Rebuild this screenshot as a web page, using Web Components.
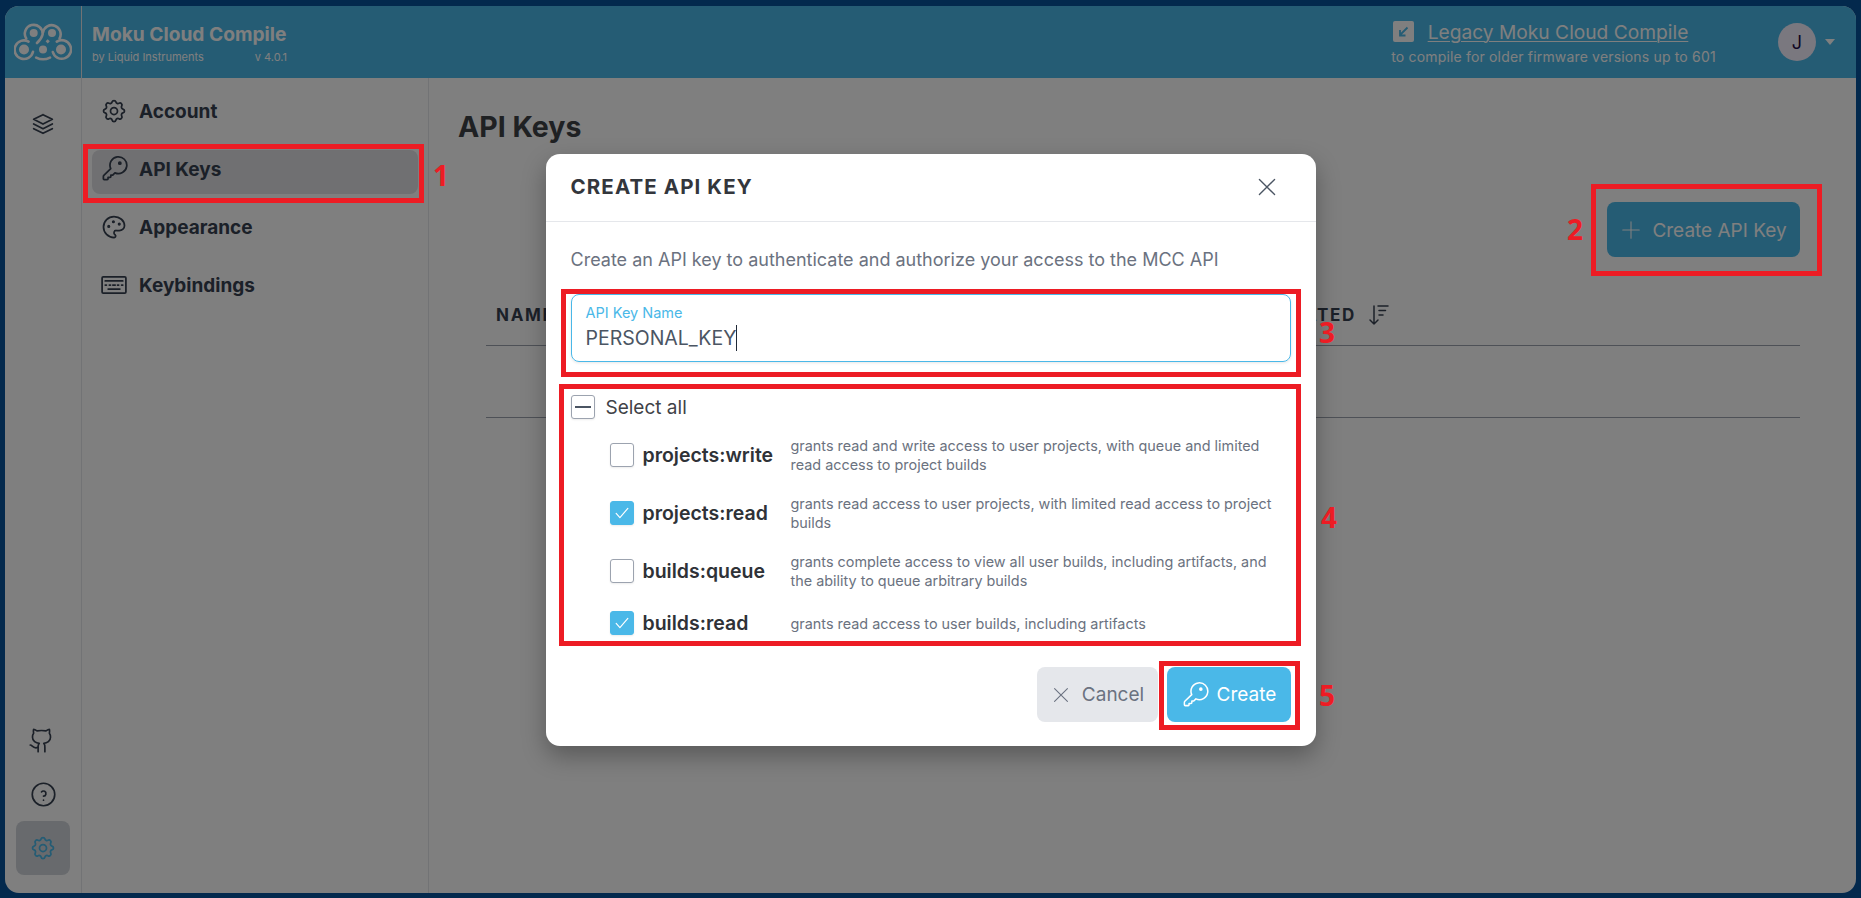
<!DOCTYPE html>
<html lang="en"><head><meta charset="utf-8"><title>Moku Cloud Compile</title>
<style>
html,body{margin:0;height:100%}
body{font-family:Inter,"Liberation Sans",sans-serif;background:#06529a;overflow:hidden}
</style></head><body>
<moku-app>
  <moku-header slot="header"></moku-header>
  <moku-rail slot="rail"></moku-rail>
  <moku-nav slot="nav">
    <nav-item icon="settings">Account</nav-item>
    <nav-item icon="key" active>API Keys</nav-item>
    <nav-item icon="palette">Appearance</nav-item>
    <nav-item icon="keyboard">Keybindings</nav-item>
  </moku-nav>
  <keys-page slot="main"></keys-page>
</moku-app>
<modal-overlay>
  <key-modal></key-modal>
</modal-overlay>
<mark-box x="83" y="144" w="341" h="59" n="1" nx="433" ny="165"></mark-box>
<mark-box x="1591" y="184" w="231" h="92" n="2" nx="1567" ny="219"></mark-box>
<mark-box x="561" y="289" w="740" h="88" n="3" nx="1319" ny="322"></mark-box>
<mark-box x="559" y="384" w="742" h="262" n="4" nx="1321" ny="507"></mark-box>
<mark-box x="1159" y="661" w="141" h="69" n="5" nx="1319" ny="685"></mark-box>
<script>
const ICONS={
settings:'<path d="M10.325 4.317c.426 -1.756 2.924 -1.756 3.35 0a1.724 1.724 0 0 0 2.573 1.066c1.543 -.94 3.31 .826 2.37 2.37a1.724 1.724 0 0 0 1.065 2.572c1.756 .426 1.756 2.924 0 3.35a1.724 1.724 0 0 0 -1.066 2.573c.94 1.543 -.826 3.31 -2.37 2.37a1.724 1.724 0 0 0 -2.572 1.065c-.426 1.756 -2.924 1.756 -3.35 0a1.724 1.724 0 0 0 -2.573 -1.066c-1.543 .94 -3.31 -.826 -2.37 -2.37a1.724 1.724 0 0 0 -1.065 -2.572c-1.756 -.426 -1.756 -2.924 0 -3.35a1.724 1.724 0 0 0 1.066 -2.573c-.94 -1.543 .826 -3.31 2.37 -2.37c1 .608 2.296 .07 2.572 -1.065z"/><circle cx="12" cy="12" r="3"/>',
key:'<path d="M9.2 11.7 3.3 17.4c-.3.3-.4.6-.4 1v2c0 .4.3.7.7.7h2.6c.4 0 .7-.3.7-.7v-1.2h1.7c.4 0 .7-.3.7-.7v-1.3h1.6l1.9-1.9A7.2 7.2 0 1 0 9.2 11.7z"/><circle cx="17" cy="7" r=".9" fill="currentColor"/>',
palette:'<path d="M12 21a9 9 0 0 1 0 -18c4.97 0 9 3.582 9 8c0 1.06 -.474 2.078 -1.318 2.828c-.844 .75 -1.989 1.172 -3.182 1.172h-2.5a2 2 0 0 0 -1 3.75a1.3 1.3 0 0 1 -1 2.25"/><circle cx="7.5" cy="11.5" r=".6" fill="currentColor"/><circle cx="11.5" cy="7.5" r=".6" fill="currentColor"/><circle cx="16.5" cy="9.5" r=".6" fill="currentColor"/>',
keyboard:'<rect x="1.8" y="5" width="20.4" height="14" rx="1"/><path d="M4.5 8.5h15M4.5 12h1M8 12h1M11 12h2M15 12h1M18.5 12h1M7 15.5h10"/>',
stack:'<path d="M12 4l-8 4l8 4l8 -4l-8 -4"/><path d="M4 12l8 4l8 -4"/><path d="M4 16l8 4l8 -4"/>',
github:'<path d="M15 22v-4a4.8 4.8 0 0 0-1-3.5c3 0 6-2 6-5.5.08-1.25-.27-2.48-1-3.5.28-1.15.28-2.35 0-3.5 0 0-1 0-3 1.5-2.64-.5-5.36-.5-8 0C6 2 5 2 5 2c-.3 1.15-.3 2.35 0 3.5A5.403 5.403 0 0 0 4 9c0 3.5 3 5.5 6 5.5-.39.49-.68 1.05-.85 1.65-.17.6-.22 1.23-.15 1.85v4"/><path d="M9 18c-4.51 2-5-2-7-2"/>',
help:'<circle cx="12" cy="12" r="10"/><path d="M12 17v.01"/><path d="M12 13.5a2.3 2.3 0 0 0 1 -4.3a2.3 2.3 0 0 0 -2.8 .55"/>',
plus:'<path d="M12 3v18M3 12h18"/>',
x:'<path d="M5 5l14 14M19 5L5 19"/>',
check:'<path d="M5 12.5l4.5 5L19 6.5"/>',
sort:'<path d="M8 3v18M4 17l4 4 4-4"/><path d="M12 3h10M13 7.5h6.5M13 12h4"/>'
};
class MokuIcon extends HTMLElement{
  static get observedAttributes(){return['name']}
  constructor(){super();this.attachShadow({mode:'open'})}
  connectedCallback(){this.render()}
  attributeChangedCallback(){this.render()}
  render(){
    const s=this.getAttribute('size')||24,w=this.getAttribute('sw')||1.5;
    this.shadowRoot.innerHTML=`<style>:host{display:inline-flex;flex:none;width:${s}px;height:${s}px}svg{width:100%;height:100%;fill:none;stroke:currentColor;stroke-width:${w};stroke-linecap:round;stroke-linejoin:round}</style><svg viewBox="0 0 24 24">${ICONS[this.getAttribute('name')]||''}</svg>`;
  }
}
customElements.define('moku-icon',MokuIcon);

class MokuApp extends HTMLElement{
  constructor(){super();this.attachShadow({mode:'open'}).innerHTML=`<style>
  :host{display:grid;box-sizing:border-box;height:898px;padding:6px 5px 5px;}
  .win{display:grid;grid-template-columns:77px 347px 1fr;grid-template-rows:72px 1fr;background:#fff;border-radius:14px;overflow:hidden;min-height:0}
  .h{grid-column:1/-1}
  .r{box-shadow:inset -1px 0 0 #e5e7eb}
  </style><div class="win"><div class="h"><slot name="header"></slot></div><div class="r" style="display:grid"><slot name="rail"></slot></div><div class="r" style="display:grid"><slot name="nav"></slot></div><div style="display:grid"><slot name="main"></slot></div></div>`;}
}
customElements.define('moku-app',MokuApp);

class MokuHeader extends HTMLElement{
  constructor(){super();this.attachShadow({mode:'open'}).innerHTML=`<style>
  :host{display:flex;height:72px;background:#4ab8e8;color:#fff;align-items:stretch}
  .logo{width:76px;border-right:1px solid #e5e7eb;display:flex;align-items:center;justify-content:center}
  .brand{padding:2px 0 0 10px;width:195px;display:flex;flex-direction:column;justify-content:center}
  .t{font-size:19.2px;font-weight:700;line-height:24px;white-space:nowrap;height:25px}
  .s{display:flex;justify-content:space-between;font-size:11px;line-height:16px;margin-top:2px;white-space:nowrap;font-weight:400}
  .sp{flex:1}
  .leg{display:flex;flex-direction:column;align-items:center;justify-content:center;width:327px;margin-right:61px;padding-top:1px}
  .a{display:flex;align-items:center;gap:14px;font-size:19.2px;line-height:26px;height:26px;margin-right:26px}
  .a u{text-underline-offset:2px;text-decoration-thickness:1px}
  .box{width:21px;height:21px;background:#fff;border-radius:2px;display:flex;align-items:center;justify-content:center;color:#4ab8e8}
  .b{font-size:14px;line-height:20px;margin-top:2px;white-space:nowrap;letter-spacing:.17px}
  .av{width:38px;height:38px;border-radius:50%;background:#f4f0ff;color:#1e0b46;display:flex;align-items:center;justify-content:center;font-size:18px;align-self:center}
  .caret{align-self:center;margin:0 21px 0 9px;width:0;height:0;border:5px solid transparent;border-top:6px solid #fff;border-bottom:0}
  </style>
  <div class="logo"><svg width="58" height="38" viewBox="14 24 58 38" fill="none" stroke="#fff" stroke-width="2.6" stroke-linecap="round">
    <g fill="#fff" stroke="none"><circle cx="24" cy="50.5" r="5"/><circle cx="43" cy="50.5" r="4"/><circle cx="61" cy="50.5" r="5"/><circle cx="33.7" cy="34" r="4"/><circle cx="52" cy="34" r="4"/><path d="M47.7 40.2l2.1 2.1-2.1 2.1-2.1-2.1z"/></g>
    <path d="M28.5 42.6A9.3 9.3 0 1 0 33 52.8"/><path d="M26.2 39.5A8.9 8.9 0 1 1 42.6 35.5Q41.5 40 37 44"/>
    <path d="M43 33.5A8.9 8.9 0 1 1 59.6 39.3"/><path d="M56.8 42.6A9.3 9.3 0 1 1 52.8 53"/>
    <path d="M36.2 58.6Q43 62 50 58.6"/>
  </svg></div>
  <div class="brand"><div class="t">Moku Cloud Compile</div><div class="s"><span>by Liquid Instruments</span><span>v 4.0.1</span></div></div>
  <div class="sp"></div>
  <div class="leg"><div class="a"><span class="box"><svg width="13" height="13" viewBox="0 0 13 13" fill="none" stroke="currentColor" stroke-width="1.8"><path d="M10.5 2.5 3 10M3 5v5.5h5.5"/></svg></span><u>Legacy Moku Cloud Compile</u></div><div class="b">to compile for older firmware versions up to 601</div></div>
  <div class="av">J</div><div class="caret"></div>`;}
}
customElements.define('moku-header',MokuHeader);

class MokuRail extends HTMLElement{
  constructor(){super();this.attachShadow({mode:'open'}).innerHTML=`<style>
  :host{display:flex;flex-direction:column;align-items:center;padding:34px 1px 18px 0;color:#374151;box-sizing:border-box;height:815px}
  .sp{flex:1}
  .i{width:54px;height:54px;display:flex;align-items:center;justify-content:center}
  .on{background:#d1d5db;border-radius:8px;color:#4ab8e8}
  </style><div class="i" style="height:24px"><moku-icon name="stack" size="28"></moku-icon></div><div class="sp"></div>
  <div class="i"><moku-icon name="github" size="27" style="margin-right:3px"></moku-icon></div><div class="i"><moku-icon name="help" size="27"></moku-icon></div><div class="i on"><moku-icon name="settings" size="28"></moku-icon></div>`;}
}
customElements.define('moku-rail',MokuRail);

class MokuNav extends HTMLElement{
  constructor(){super();this.attachShadow({mode:'open'}).innerHTML=`<style>:host{display:flex;flex-direction:column;padding:14px 11px 0 10px;gap:14px}</style><slot></slot>`;}
}
customElements.define('moku-nav',MokuNav);

class NavItem extends HTMLElement{
  constructor(){super();this.attachShadow({mode:'open'}).innerHTML=`<style>
  :host{display:flex;align-items:center;gap:11px;height:44px;box-sizing:border-box;padding:0 0 6px 8px;border-radius:8px;font-size:19px;font-weight:700;color:#374151;white-space:nowrap}
  :host([active]){background:#e0e1e5}
  </style><moku-icon size="28"></moku-icon><slot></slot>`;}
  connectedCallback(){this.shadowRoot.querySelector('moku-icon').setAttribute('name',this.getAttribute('icon'));}
}
customElements.define('nav-item',NavItem);

class KeysPage extends HTMLElement{
  constructor(){super();this.attachShadow({mode:'open'}).innerHTML=`<style>
  :host{display:flex;flex-direction:column;padding:29px 56px 0 29px;color:#374151}
  h1{margin:0;font-size:28.5px;line-height:40px;font-weight:700;color:#3f4247}
  .act{display:flex;justify-content:flex-end;margin-top:55px}
  button{font:inherit;font-size:19px;border:0;height:55px;width:193px;border-radius:8px;background:#4ab8e8;color:#fff;display:flex;align-items:center;justify-content:center;gap:10px;padding:1px 0 0}
  .th{display:flex;justify-content:space-between;margin:33px 0 0 28px;height:56px;align-items:center;border-bottom:1px solid #9ca3af;font-size:17px;line-height:20px;font-weight:700;letter-spacing:1.7px;box-sizing:border-box;padding:0 410px 6px 10px}
  .th span{display:flex;align-items:center;gap:10px}
  .row{height:72px;box-sizing:border-box;margin-left:28px;border-bottom:1px solid #9ca3af}
  </style><h1>API Keys</h1><div class="act"><button><moku-icon name="plus" size="22" sw="1.2"></moku-icon>Create API Key</button></div>
  <div class="th"><span>NAME</span><span>CREATED<moku-icon name="sort" size="24" sw="1.5"></moku-icon></span></div><div class="row"></div>`;}
}
customElements.define('keys-page',KeysPage);

class ModalOverlay extends HTMLElement{
  constructor(){super();this.attachShadow({mode:'open'}).innerHTML=`<style>:host{position:absolute;inset:0;height:898px;background:rgba(0,0,0,.5);display:flex;align-items:center;justify-content:center}</style><slot></slot>`;}
}
customElements.define('modal-overlay',ModalOverlay);

class PermRow extends HTMLElement{
  constructor(){super();this.attachShadow({mode:'open'}).innerHTML=`<style>
  :host{display:grid;grid-template-columns:24px 139px 1fr;column-gap:9px;align-items:center;min-height:24px}
  .n{font-size:19.5px;font-weight:600;color:#2f3237;white-space:nowrap}
  .d{font-size:14.4px;line-height:19px;color:#6b7280}
  </style><check-box></check-box><span class="n"></span><span class="d"><slot></slot></span>`;}
  connectedCallback(){
    this.shadowRoot.querySelector('.n').textContent=this.getAttribute('name');
    if(this.hasAttribute('checked'))this.shadowRoot.querySelector('check-box').setAttribute('state','on');
  }
}
class CheckBox extends HTMLElement{
  static get observedAttributes(){return['state']}
  constructor(){super();this.attachShadow({mode:'open'}).innerHTML=`<style>
  :host{display:flex;align-items:center;justify-content:center;width:24px;height:24px;box-sizing:border-box;border:1px solid #9ca3af;border-radius:3px;background:#fff;box-shadow:0 1px 2px rgba(0,0,0,.08);color:#4b5563}
  :host([state=on]){background:#4ab8e8;border-color:#4ab8e8;color:#fff}
  .m{width:16px;height:2px;background:#4b5563}
  </style><span id="c"></span>`;}
  attributeChangedCallback(){this.render()}
  connectedCallback(){this.render()}
  render(){const s=this.getAttribute('state');this.shadowRoot.getElementById('c').innerHTML=s==='on'?'<moku-icon name="check" size="20" sw="1.4" style="display:block"></moku-icon>':s==='mixed'?'<div class="m"></div>':'';}
}
customElements.define('check-box',CheckBox);
customElements.define('perm-row',PermRow);

class KeyModal extends HTMLElement{
  constructor(){super();this.attachShadow({mode:'open'}).innerHTML=`<style>
  :host{display:flex;flex-direction:column;width:770px;height:592px;box-sizing:border-box;background:#fff;border-radius:14px;box-shadow:0 10px 25px rgba(0,0,0,.3);color:#1f2937;margin-top:2px}
  .hd{height:68px;flex:none;border-bottom:1px solid #e5e7eb;display:flex;align-items:center;justify-content:space-between;padding:0 36px 2px 25px;box-sizing:border-box}
  .ti{font-size:20.5px;font-weight:700;letter-spacing:1.1px;color:#33363c}
  .x{color:#4b5563}
  .bd{padding:25px 25px 0;display:flex;flex-direction:column}
  .de{font-size:18px;line-height:26px;color:#6b7280;white-space:nowrap}
  .in{margin-top:21px;height:68px;box-sizing:border-box;border:1px solid #4ab8e8;border-radius:8px;padding:8px 14px;box-shadow:0 1px 3px rgba(0,0,0,.1)}
  .la{font-size:14.5px;line-height:20px;color:#4ab8e8}
  .va{font-size:19.5px;line-height:26px;color:#4b5563;margin-top:2px;display:flex;align-items:center}
  .cur{width:1px;height:26px;background:#1f2937}
  .sa{display:flex;align-items:center;gap:11px;margin-top:33px;font-size:19px;color:#3f4247}
  .li{display:flex;flex-direction:column;gap:20px;margin:17px 15px 0 39px}
  .li perm-row:last-child{margin-top:1px}
  .ft{margin-top:32px;display:flex;justify-content:flex-end;gap:9px}
  button{font:inherit;font-size:19px;border:0;height:55px;border-radius:8px;display:flex;align-items:center;justify-content:center;padding:0;gap:10px}
  .c{width:121px;background:#e5e7eb;color:#6b7280}
  .k{width:124px;background:#4ab8e8;color:#fff;gap:8px}
  </style>
  <div class="hd"><span class="ti">CREATE API KEY</span><moku-icon class="x" name="x" size="26" sw="1.2"></moku-icon></div>
  <div class="bd">
   <div class="de">Create an API key to authenticate and authorize your access to the MCC API</div>
   <div class="in"><div class="la">API Key Name</div><div class="va">PERSONAL_KEY<span class="cur"></span></div></div>
   <div class="sa"><check-box state="mixed"></check-box>Select all</div>
   <div class="li">
    <perm-row name="projects:write">grants read and write access to user projects, with queue and limited read access to project builds</perm-row>
    <perm-row name="projects:read" checked>grants read access to user projects, with limited read access to project builds</perm-row>
    <perm-row name="builds:queue">grants complete access to view all user builds, including artifacts, and the ability to queue arbitrary builds</perm-row>
    <perm-row name="builds:read" checked>grants read access to user builds, including artifacts</perm-row>
   </div>
   <div class="ft"><button class="c"><moku-icon name="x" size="22" sw="1.2"></moku-icon>Cancel</button><button class="k"><moku-icon name="key" size="28" sw="1.3"></moku-icon>Create</button></div>
  </div>`;}
}
customElements.define('key-modal',KeyModal);

class MarkBox extends HTMLElement{
  constructor(){super();this.attachShadow({mode:'open'}).innerHTML=`<style>
  :host{display:contents}
  .b{position:absolute;box-sizing:border-box;border:5px solid #ed1c24}
  .n{position:absolute;font:700 28px/20px "Open Sans","Noto Sans",sans-serif;color:#ed1c24}
  </style><div class="b"></div><div class="n"></div>`;}
  connectedCallback(){
    const g=a=>this.getAttribute(a)+'px',b=this.shadowRoot.querySelector('.b'),n=this.shadowRoot.querySelector('.n');
    Object.assign(b.style,{left:g('x'),top:g('y'),width:g('w'),height:g('h')});
    Object.assign(n.style,{left:g('nx'),top:g('ny')});
    n.textContent=this.getAttribute('n');
  }
}
customElements.define('mark-box',MarkBox);
</script>
</body></html>
